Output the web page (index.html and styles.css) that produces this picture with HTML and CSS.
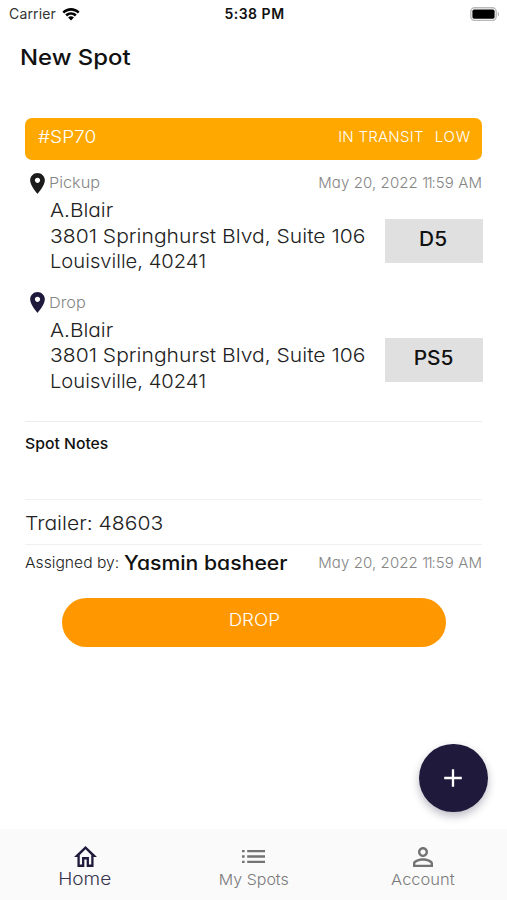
FILE: index.html
```html
<!DOCTYPE html>
<html lang="en">
<head>
<meta charset="utf-8">
<title>New Spot</title>
<link rel="stylesheet" href="styles.css">
</head>
<body>
<div class="screen">
  <div class="status">
    <div class="carrier"><span class="carrier-name">Carrier</span>
      <svg class="wifi" viewBox="0 0 18 14"><path d="M0.4 4.7C5.2 -0.3 12.8 -0.3 17.6 4.7L15.8 6.5C12 2.7 6 2.7 2.2 6.5ZM3.3 7.6C6.5 4.4 11.5 4.4 14.7 7.6L12.9 9.4C10.7 7.2 7.3 7.2 5.1 9.4ZM6.1 10.4C7.7 8.9 10.3 8.9 11.9 10.4L9 13.4Z"/></svg>
    </div>
    <span class="clock">5:38 PM</span>
    <svg class="battery" viewBox="0 0 30 14"><rect x="0.8" y="0.8" width="25.4" height="12.6" rx="3.8" fill="#fff" stroke="#b9b9b9" stroke-width="1.4"/><rect x="2.4" y="2.5" width="22.2" height="9.2" rx="1.8" fill="#000"/><path d="M27.8 5C29.4 5.5 29.4 8.7 27.8 9.2Z" fill="#b0b0b0"/></svg>
  </div>
  <header class="title"><span class="title-text">New Spot</span></header>
  <main class="content">
    <div class="banner"><span class="code">#SP70</span><span class="state">IN TRANSIT</span><span class="priority">LOW</span></div>
    <section class="stop pickup">
      <div class="stop-head">
        <svg class="pin" viewBox="5 2 14 20"><path d="M12 2C8.13 2 5 5.13 5 9c0 5.25 7 13 7 13s7-7.75 7-13c0-3.87-3.13-7-7-7zm0 9.5c-1.38 0-2.5-1.12-2.5-2.5s1.12-2.5 2.5-2.5 2.5 1.12 2.5 2.5-1.12 2.5-2.5 2.5z"/></svg>
        <span class="label">Pickup</span><span class="date">May 20, 2022 <span class="hour">11</span>:59 AM</span>
      </div>
      <div class="stop-body">
        <div class="address"><div><span class="name">A.Blair</span></div><div><span class="street">3801 Springhurst Blvd, Suite 106</span></div><div><span class="city">Louisville, 40241</span></div></div>
        <div class="dock"><span class="dock-text">D5</span></div>
      </div>
    </section>
    <section class="stop drop">
      <div class="stop-head">
        <svg class="pin" viewBox="5 2 14 20"><path d="M12 2C8.13 2 5 5.13 5 9c0 5.25 7 13 7 13s7-7.75 7-13c0-3.87-3.13-7-7-7zm0 9.5c-1.38 0-2.5-1.12-2.5-2.5s1.12-2.5 2.5-2.5 2.5 1.12 2.5 2.5-1.12 2.5-2.5 2.5z"/></svg>
        <span class="label">Drop</span>
      </div>
      <div class="stop-body">
        <div class="address"><div><span class="name">A.Blair</span></div><div><span class="street">3801 Springhurst Blvd, Suite 106</span></div><div><span class="city">Louisville, 40241</span></div></div>
        <div class="dock"><span class="dock-text">PS5</span></div>
      </div>
    </section>
    <section class="notes"><span class="notes-title">Spot Notes</span></section>
    <section class="trailer"><span class="trailer-text">Trailer: 48603</span></section>
    <section class="assigned"><span class="by">Assigned by:</span><span class="person">Yasmin basheer</span><span class="date">May 20, 2022 <span class="hour">11</span>:59 AM</span></section>
    <button class="action"><span class="action-text">DROP</span></button>
  </main>
  <button class="fab" aria-label="Add"><svg viewBox="0 0 20 20"><path d="M10 1.2V18.8M1.2 10H18.8" stroke="#fff" stroke-width="2.3"/></svg></button>
  <nav class="tabs">
    <a class="tab active"><svg class="icon-home" viewBox="2 3 20 17" preserveAspectRatio="none"><path d="M12 5.69l5 4.5V18h-2v-6H9v6H7v-7.81l5-4.5M12 3L2 12h3v8h6v-6h2v6h6v-8h3L12 3z"/></svg><span class="tab-home">Home</span></a>
    <a class="tab"><svg class="icon-list" viewBox="0 0 23 13"><path d="M0 0h2.6v2.3H0zM5.2 0H23v2.3H5.2zM0 5.3h2.6v2.4H0zM5.2 5.3H23v2.4H5.2zM0 10.7h2.6V13H0zM5.2 10.7H23V13H5.2z"/></svg><span class="tab-spots">My Spots</span></a>
    <a class="tab"><svg class="icon-user" viewBox="4 4 16 16"><path d="M12 5.9c1.16 0 2.1.94 2.1 2.1s-.94 2.1-2.1 2.1S9.9 9.16 9.9 8s.94-2.1 2.1-2.1m0 9c2.97 0 6.1 1.46 6.1 2.1v1.1H5.9V17c0-.64 3.13-2.1 6.1-2.1M12 4C9.79 4 8 5.79 8 8s1.79 4 4 4 4-1.79 4-4-1.79-4-4-4zm0 9c-2.67 0-8 1.34-8 4v3h16v-3c0-2.66-5.33-4-8-4z"/></svg><span class="tab-account">Account</span></a>
  </nav>
</div>
</body>
</html>
```
FILE: styles.css
```css
* { box-sizing: border-box; }
body { margin: 0; background: #fff; }
.screen {
  position: relative;
  width: 507px;
  height: 900px;
  display: flex;
  flex-direction: column;
  overflow: hidden;
  background: #fff;
  color: #222;
  font-family: Inter, "Open Sans", sans-serif;
  font-weight: 300;
  font-feature-settings: "cv11";
}
span { white-space: nowrap; }
svg { display: block; flex: none; }
button { border: 0; padding: 0; font: inherit; font-feature-settings: inherit; }

/* Wide letterforms: text is stretched horizontally from its left edge */
.title-text, .code, .label, .name, .street, .city, .notes-title,
.trailer-text, .by, .person { display: inline-block; transform-origin: 0 50%; }
.dock-text, .action-text, .tab span { display: inline-block; transform-origin: 50% 50%; }

.status { height: 28px; display: grid; grid-template-columns: 1fr auto 1fr; align-items: center; padding: 0 7px 1px 9px; color: #111; font-feature-settings: normal; }
.carrier { display: flex; align-items: center; gap: 6px; }
.carrier-name { font-size: 14px; font-weight: 400; color: #333; letter-spacing: .15px; }
.wifi { width: 18px; height: 14px; }
.clock { font-size: 14px; font-weight: 600; letter-spacing: .5px; }
.battery { width: 30px; height: 14px; justify-self: end; }

.title { height: 58px; padding-left: 19.5px; line-height: 58px; color: #111; }
.title-text { font-size: 22px; font-weight: 500; transform: scaleX(1.085); }

.content { flex: 1; display: flex; flex-direction: column; padding: 32px 25px 0; }
.banner { height: 41.5px; display: flex; align-items: center; padding: 0 12px 4px 13px; border-radius: 7px; background: #ffa900; color: #fff; }
.code { font-size: 17.5px; flex: none; margin-right: auto; transform: scaleX(1.09); }
.state, .priority { font-size: 15px; letter-spacing: .25px; }
.priority { margin-left: 11px; letter-spacing: .8px; margin-right: -1px; }

.stop { height: 119.5px; }
.pickup { margin-top: 10px; }
.stop-head { height: 27px; display: flex; align-items: center; padding-left: 5px; }
.pin { width: 15px; height: 21px; fill: #1b1b1b; margin-right: 4px; }
.drop .pin { fill: #1f1a3b; }
.label, .date { font-size: 15px; color: #858585; }
.label { transform: scaleX(1.085); }
.stop-head .label, .stop-head .date { padding-bottom: 1.5px; }
.drop .label { padding-bottom: 0; }
.date { margin-left: auto; letter-spacing: .1px; }
.hour { letter-spacing: -1.3px; }
.stop-body { display: flex; padding-left: 24.5px; line-height: 25.6px; }
.address { flex: 1; font-size: 19.3px; padding-top: 1.5px; }
.address div { height: 25.6px; }
.name { transform: scaleX(1.08); }
.street { transform: scaleX(1.092); }
.city { transform: scaleX(1.045); }
.dock { width: 98px; height: 44px; margin: 22px -0.5px 0 0; padding-bottom: 1.5px; background: #e0e0e0; display: flex; align-items: center; justify-content: center; color: #111; font-size: 19.5px; font-weight: 500; }
.dock-text { transform: scaleX(1.07); }

.notes { height: 78px; margin-top: 12px; border-top: 1px solid #ececec; padding-top: 12px; line-height: 18px; color: #111; }
.notes-title { font-size: 15px; font-weight: 500; transform: scaleX(1.05); }
.trailer { height: 45.5px; border-top: 1px solid #f0f0f0; line-height: 46px; }
.trailer-text { font-size: 19.3px; transform: scaleX(1.093); }
.assigned { height: 53.5px; border-top: 1px solid #f0f0f0; display: flex; padding-top: 5.5px; line-height: 24px; }
.by { font-size: 15px; transform: scaleX(1.045); }
.person { font-size: 20px; font-weight: 500; color: #111; margin-left: 8.5px; transform: scaleX(1.06); }
.action { width: 384px; height: 49px; margin-left: 37px; padding-bottom: 4px; border-radius: 25px; background: #ff9800; color: #fff; font-size: 17px; }
.action-text { transform: scaleX(1.1); }

.fab { position: absolute; left: 419px; top: 743.5px; width: 68.5px; height: 68.5px; border-radius: 50%; background: #1f1a3b; display: grid; place-items: center; box-shadow: 0 4px 8px rgba(31, 26, 59, .3); }
.fab svg { width: 20px; height: 20px; }

.tabs { height: 71px; display: grid; grid-template-columns: repeat(3, 1fr); background: #fafafa; }
.tab { display: flex; flex-direction: column; align-items: center; padding-top: 17px; color: #7b7b7b; fill: #737373; line-height: 20px; font-size: 15px; }
.tab.active { color: #39344f; fill: #1f1a3b; }
.icon-home { width: 23px; height: 21px; margin: 0 0 2px 1px; }
.icon-list { width: 23px; height: 13px; margin: 4px 0 7px; }
.icon-user { width: 20px; height: 20px; margin: 1px 0 3px; }
.tab .tab-home { font-size: 17px; transform: scaleX(1.12); }
.tab .tab-spots { transform: scaleX(1.065); }
.tab .tab-account { transform: scaleX(1.1); }
```
